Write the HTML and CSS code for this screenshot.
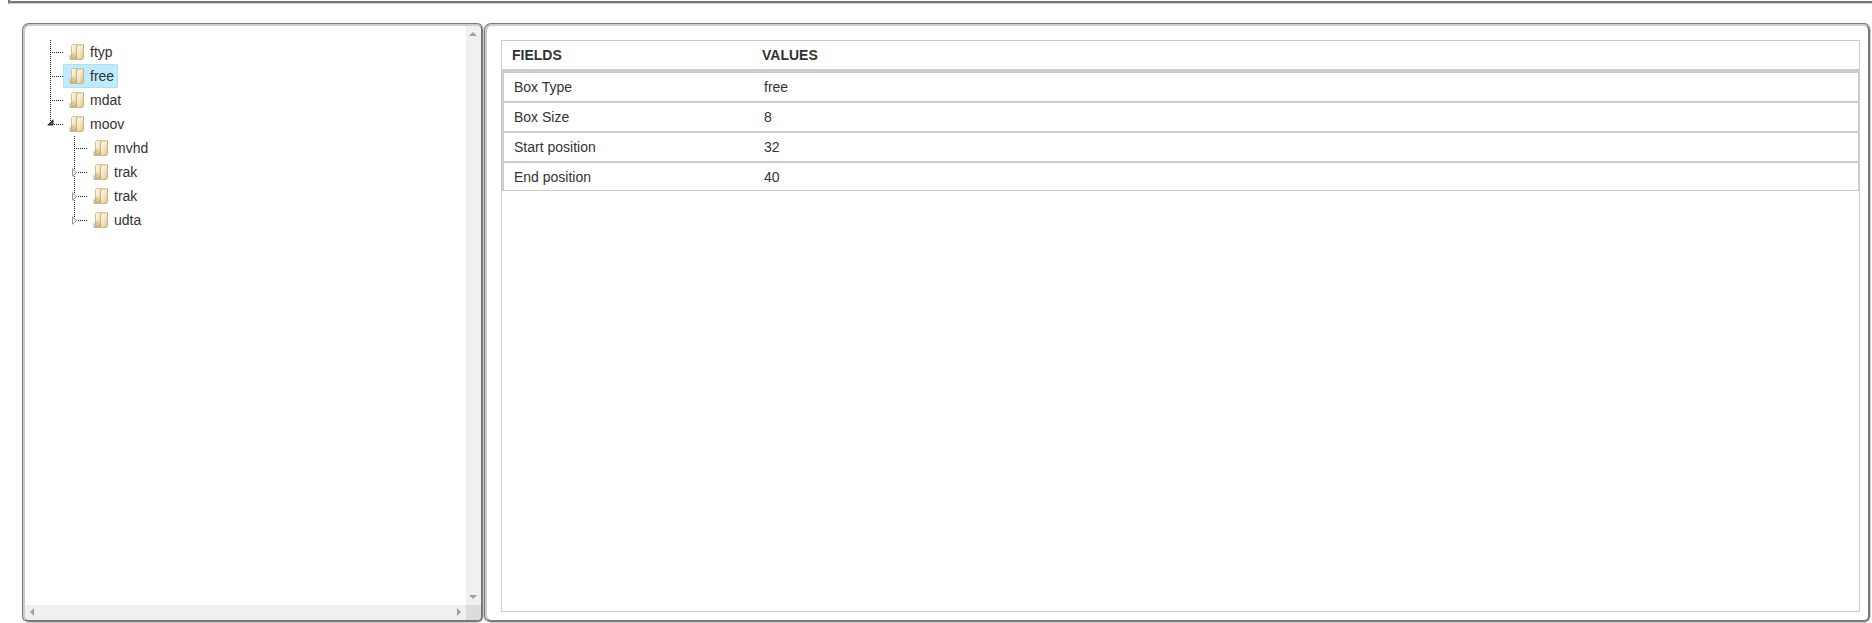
FILE: index.html
```html
<!DOCTYPE html>
<html lang="en">
<head>
<meta charset="utf-8">
<title>Box viewer</title>
<link rel="stylesheet" href="styles.css">
</head>
<body>
<svg class="defs" width="0" height="0" aria-hidden="true">
  <defs>
    <linearGradient id="paper" x1="0" y1="0" x2="1" y2="1">
      <stop offset="0" stop-color="#fffaf0"/><stop offset=".5" stop-color="#f3e6c3"/><stop offset="1" stop-color="#d9be80"/>
    </linearGradient>
    <linearGradient id="flap" x1="0" y1="0" x2="0" y2="1">
      <stop offset="0" stop-color="#f2e6c6"/><stop offset="1" stop-color="#c9aa70"/>
    </linearGradient>
    <symbol id="folder" viewBox="0 0 16 16">
      <path d="M0 12L2.5 10V15.5H1Z" fill="#c9c7c0"/>
      <path d="M2.5 1.5L3.5 .5H8.5V13H2.5Z" fill="url(#paper)" stroke="#d0b988" stroke-width=".9"/>
      <path d="M7.5 2H8.5L9.5 .8H14.5V14L13.5 15.5H8L7.5 14Z" fill="url(#paper)" stroke="#c6aa70" stroke-width=".9"/>
      <path d="M2.8 10L4 9.5L5 11L7.3 12.5V15.5H1.5L1 14.5L2.8 12.5Z" fill="url(#flap)" stroke="#c0a268" stroke-width=".6"/>
    </symbol>
  </defs>
</svg>
<div class="topbar"></div>
<main class="panels">
  <section class="panel tree-panel">
    <div class="tree-view">
      <ul class="tree">
        <li><i class="joint"></i><a class="node"><svg class="icon"><use href="#folder"/></svg>ftyp</a></li>
        <li><i class="joint"></i><a class="node selected"><svg class="icon"><use href="#folder"/></svg>free</a></li>
        <li><i class="joint"></i><a class="node"><svg class="icon"><use href="#folder"/></svg>mdat</a></li>
        <li class="last"><i class="joint"></i><svg class="toggle open" viewBox="0 0 7 7"><path d="M6 .8V6H.8Z" fill="#555" stroke="#222"/></svg><a class="node"><svg class="icon"><use href="#folder"/></svg>moov</a>
          <ul class="tree">
            <li><i class="joint"></i><a class="node"><svg class="icon"><use href="#folder"/></svg>mvhd</a></li>
            <li><i class="joint"></i><svg class="toggle" viewBox="0 0 6 9"><path d="M.5 .8V8.2L4.5 4.5Z" fill="#fff" stroke="#999"/></svg><a class="node"><svg class="icon"><use href="#folder"/></svg>trak</a></li>
            <li><i class="joint"></i><svg class="toggle" viewBox="0 0 6 9"><path d="M.5 .8V8.2L4.5 4.5Z" fill="#fff" stroke="#999"/></svg><a class="node"><svg class="icon"><use href="#folder"/></svg>trak</a></li>
            <li class="last"><i class="joint"></i><svg class="toggle" viewBox="0 0 6 9"><path d="M.5 .8V8.2L4.5 4.5Z" fill="#fff" stroke="#999"/></svg><a class="node"><svg class="icon"><use href="#folder"/></svg>udta</a></li>
          </ul>
        </li>
      </ul>
    </div>
    <div class="bar vertical">
      <svg width="8" height="4" viewBox="0 0 8 4"><path d="M0 4L4 0L8 4Z" fill="#a0a0a0"/></svg>
      <svg width="8" height="4" viewBox="0 0 8 4"><path d="M0 0L4 4L8 0Z" fill="#a0a0a0"/></svg>
    </div>
    <div class="bar horizontal">
      <svg width="4" height="8" viewBox="0 0 4 8"><path d="M4 0L0 4L4 8Z" fill="#a0a0a0"/></svg>
      <svg width="4" height="8" viewBox="0 0 4 8"><path d="M0 0L4 4L0 8Z" fill="#a0a0a0"/></svg>
    </div>
    <div class="corner"></div>
  </section>
  <section class="panel detail-panel">
    <div class="details">
      <div class="head"><span>FIELDS</span><span>VALUES</span></div>
      <div class="rows">
        <div class="row"><span>Box Type</span><span>free</span></div>
        <div class="row"><span>Box Size</span><span>8</span></div>
        <div class="row"><span>Start position</span><span>32</span></div>
        <div class="row"><span>End position</span><span>40</span></div>
      </div>
    </div>
  </section>
</main>
</body>
</html>
```

FILE: styles.css
```css
* { box-sizing: border-box; }
body {
  margin: 0;
  height: 623px;
  overflow: hidden;
  background: #fff;
  color: #333;
  font: 14px/24px "Liberation Sans", Arial, sans-serif;
}
.defs { display: block; height: 0; }
.topbar {
  height: 4px;
  margin: 0 -8px 0 8px;
  border: 0 groove #ccc;
  border-width: 0 0 3px 3px;
}
.panels { display: flex; padding: 19px 0 0 22px; }
.panel {
  height: 600px;
  border: 3px groove #ccc;
  border-radius: 7px;
  overflow: hidden;
}
.tree-panel {
  width: 462px;
  display: grid;
  grid-template: 1fr 15px / 1fr 15px;
}
.tree-view { padding: 14px 0 0 18px; }
.tree { list-style: none; margin: 0; padding: 0; }
.tree .tree { margin-left: 4px; }
.tree li {
  position: relative;
  padding-left: 20px;
  background: repeating-linear-gradient(#222 0 1px, transparent 1px 2px) 7px 0 / 1px 100% no-repeat;
}
.tree li.last { background-size: 1px 12px; }
.joint {
  position: absolute;
  left: 7px;
  top: 12px;
  width: 13px;
  height: 1px;
  background: repeating-linear-gradient(90deg, #222 0 1px, transparent 1px 2px);
}
.toggle { position: absolute; left: 5px; top: 8px; width: 6px; height: 9px; }
.toggle.open { left: 4px; top: 7px; width: 7px; height: 7px; }
.node {
  display: flex;
  align-items: center;
  width: max-content;
  height: 24px;
  padding: 0 3px 0 5px;
  border: 1px solid transparent;
  border-radius: 1px;
}
.node.selected { background: #beebff; border-color: #b0e0f5; }
.icon { width: 16px; height: 16px; margin-right: 5px; }
.bar { display: flex; justify-content: space-between; align-items: center; background: #f0f0f0; }
.vertical { flex-direction: column; padding: 6px 0; }
.vertical svg { margin-right: 1px; }
.horizontal { padding: 0 5px; }
.horizontal svg { margin-bottom: 1px; }
.corner { background: #dcdcdc; }
.detail-panel { width: 1387px; padding: 14px 8px 8px 14px; }
.details { height: 572px; border: 1px solid #ccc; }
.head { display: flex; height: 28px; padding-left: 10px; line-height: 28px; font-weight: bold; }
.head span, .row span { width: 250px; }
.rows {
  border: solid #ccc;
  border-width: 4px 1px 1px 2px;
}
.row { display: flex; height: 30px; padding-left: 10px; line-height: 28px; border-bottom: 2px solid #ccc; }
.row:last-child { height: 27px; border-bottom: 0; }
```
